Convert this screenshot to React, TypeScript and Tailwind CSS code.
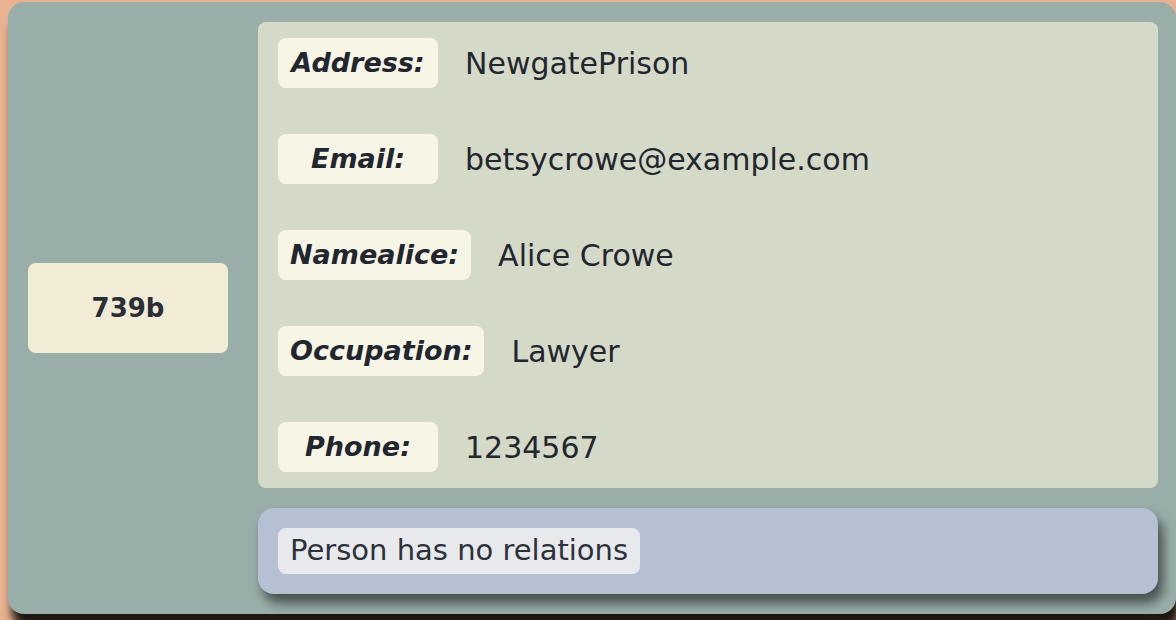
const details = [
  { label: "Address:", value: "NewgatePrison" },
  { label: "Email:", value: "betsycrowe@example.com" },
  { label: "Namealice:", value: "Alice Crowe" },
  { label: "Occupation:", value: "Lawyer" },
  { label: "Phone:", value: "1234567" },
];

function DetailRow({ label, value }: { label: string; value: string }) {
  return (
    <div className="flex items-center">
      <div className="flex h-[50px] min-w-[160px] items-center justify-center rounded-lg bg-[#f7f5e5] px-3 text-[27px] font-bold italic text-[#22262e]">
        {label}
      </div>
      <div className="ml-[27px] text-[30px] text-[#22262e]">{value}</div>
    </div>
  );
}

export default function App() {
  return (
    <div className="h-[620px] w-[1176px] overflow-hidden bg-[#e9b392] pl-2 pt-[2px] font-['DejaVu_Sans',sans-serif]">
      <div className="flex w-[1168px] items-center gap-[30px] rounded-2xl bg-[#9aaea9] py-5 pl-5 pr-[18px] shadow-[4px_14px_10px_rgba(30,22,17,1)]">
        <div className="flex h-[90px] w-[200px] shrink-0 items-center justify-center rounded-lg bg-[#f2ecd6] text-[26px] font-bold text-[#2a2e36]">
          739b
        </div>
        <div className="flex flex-1 flex-col gap-5">
          <div className="flex flex-col gap-[46px] rounded-lg bg-[#d5d9c8] px-5 py-4">
            {details.map((d) => (
              <DetailRow key={d.label} label={d.label} value={d.value} />
            ))}
          </div>
          <div className="flex rounded-2xl bg-[#b5c1d2] p-5 shadow-[5px_9px_12px_rgba(0,0,0,0.55)]">
            <div className="flex h-[46px] items-center rounded-lg bg-[#e8e9ec] px-3 text-[29px] text-[#2c313a]">
              Person has no relations
            </div>
          </div>
        </div>
      </div>
    </div>
  );
}
